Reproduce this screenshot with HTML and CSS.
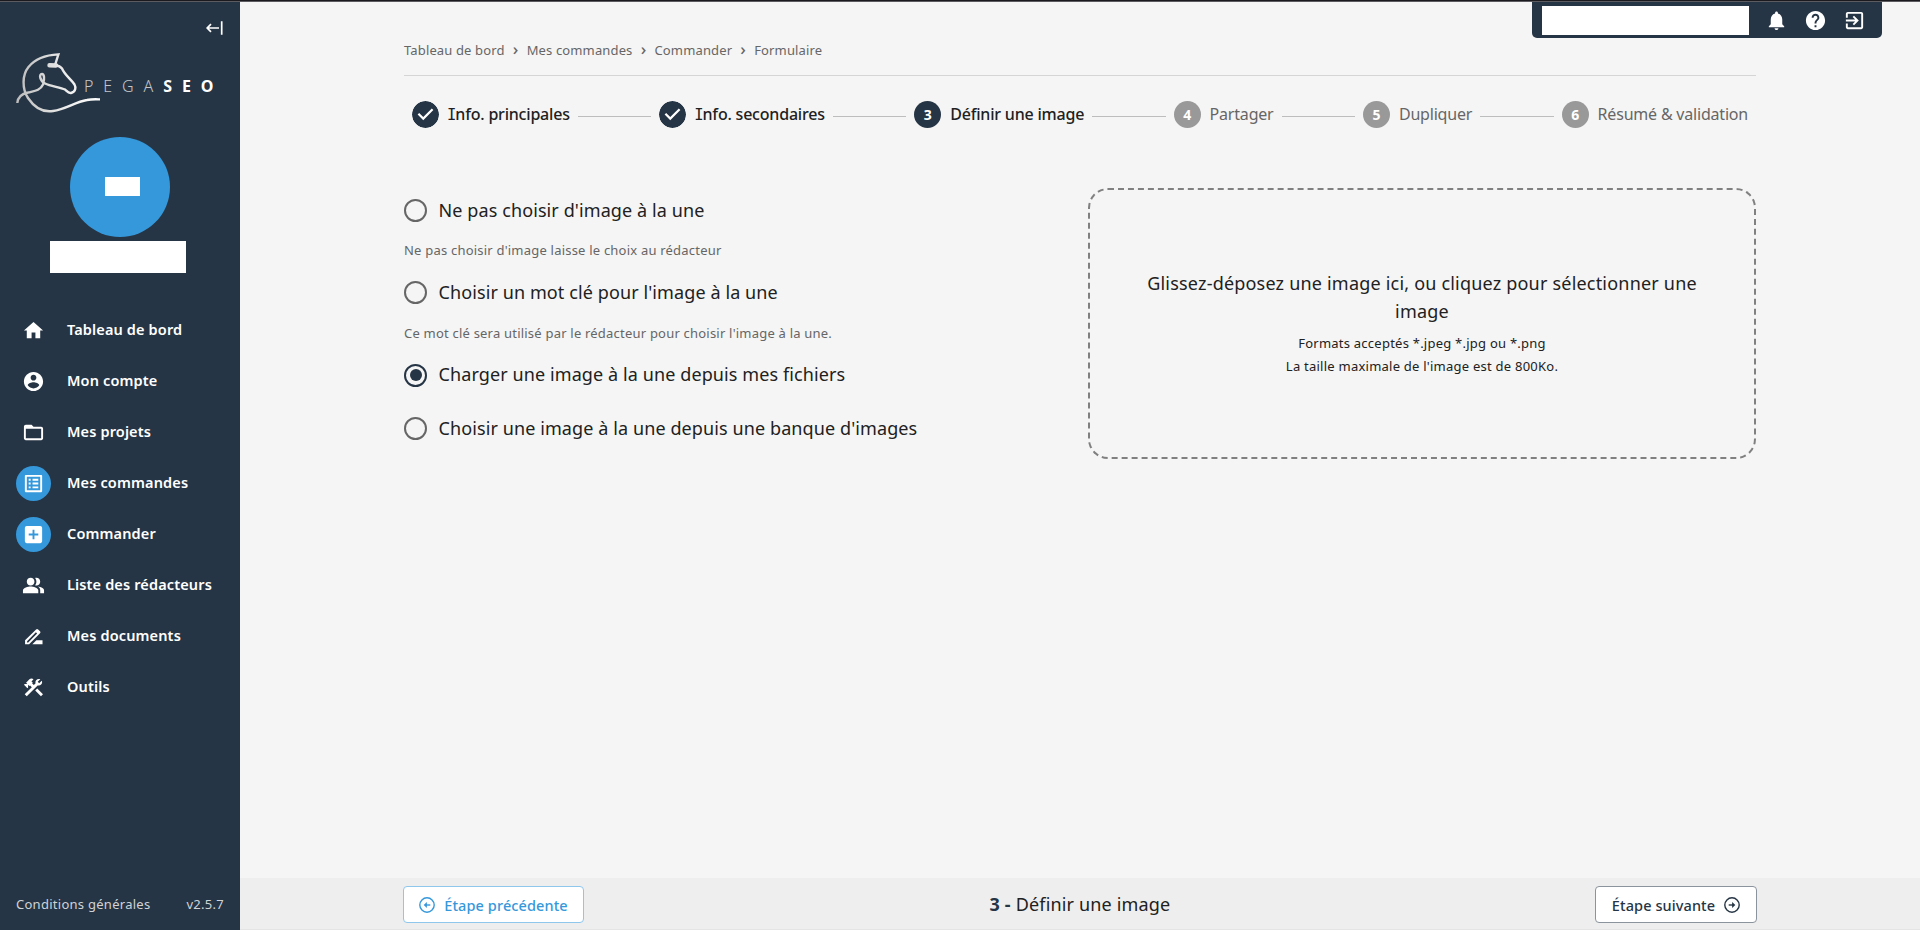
FILE: index.html
```html
<!DOCTYPE html>
<html lang="fr">
<head>
<meta charset="utf-8">
<title>Pegaseo - Commander</title>
<link rel="stylesheet" href="styles.css">
</head>
<body>
<div class="topline"></div>
<div class="app">
  <aside class="sidebar">
    <button class="collapse" aria-label="Réduire"><svg width="17" height="14" viewBox="0 0 17 14" fill="none" stroke="#fff" stroke-width="1.7"><path d="M13 7H1.500M5 3.200 1.200 7 5 10.800M15.700.3v13.400"/></svg></button>
    <div class="logo">
      <svg class="horse" width="86" height="62" viewBox="0 0 86 62" fill="none" stroke="url(#silver)" stroke-width="2.4">
        <defs><linearGradient id="silver" gradientUnits="userSpaceOnUse" x1="0" y1="0" x2="86" y2="0"><stop offset="0" stop-color="#bbb"/><stop offset=".6" stop-color="#eee"/><stop offset="1" stop-color="#fff"/></linearGradient></defs>
        <path d="M1.300 50C2 43 7 40.500 12 39.500C18 38 24 38 27 31.500C29 25 28 21 26 21C22.500 21 24 28 29 30.500C35 33.500 44 34 49 36.500C51 38 52 40.500 55 40C60 39 60 34 58.500 31.500C55 26 49 22.500 46 15.500C44 12.800 41 12.500 39 12.200L42.400 1.400C30 2 19 6 12.500 14C6 22 6 36 12 45C18 54 27 59.500 37 58C50 56 59 49 71 47C76 46 80 46.300 84 46.400"/><path d="M40 12.500L33.500 12.300" stroke-width="4.400" stroke-linecap="round"/>
      </svg>
      <span class="brand"><span class="pega">PEGA</span><b>SEO</b></span>
    </div>
    <div class="avatar"><span></span></div>
    <div class="username"></div>
    <nav class="nav">
      <a><i><svg viewBox="0 0 24 24"><path d="M10 20v-6h4v6h5v-8h3L12 3 2 12h3v8z"/></svg></i>Tableau de bord</a>
      <a><i><svg viewBox="0 0 24 24"><path d="M12 2C6.480 2 2 6.480 2 12s4.480 10 10 10 10-4.480 10-10S17.520 2 12 2zm0 3c1.660 0 3 1.340 3 3s-1.340 3-3 3-3-1.340-3-3 1.340-3 3-3zm0 14.200c-2.500 0-4.710-1.280-6-3.220.030-1.990 4-3.080 6-3.080 1.990 0 5.970 1.090 6 3.080-1.290 1.940-3.500 3.220-6 3.220z"/></svg></i>Mon compte</a>
      <a><i><svg viewBox="0 0 24 24"><path d="M20 6h-8l-2-2H4c-1.100 0-1.990.9-1.990 2L2 18c0 1.100.9 2 2 2h16c1.100 0 2-.9 2-2V8c0-1.100-.9-2-2-2zm0 12H4V8h16v10z"/></svg></i>Mes projets</a>
      <a><i class="on"><svg viewBox="0 0 24 24"><path d="M19 5v14H5V5h14m1.100-2H3.900c-.5 0-.9.4-.9.9v16.200c0 .4.4.9.9.9h16.200c.4 0 .9-.5.9-.9V3.900c0-.5-.5-.9-.9-.9zM11 7h6v2h-6V7zm0 4h6v2h-6v-2zm0 4h6v2h-6zM7 7h2v2H7zm0 4h2v2H7zm0 4h2v2H7z"/></svg></i>Mes commandes</a>
      <a><i class="on"><svg viewBox="0 0 24 24"><path d="M19 3H5c-1.110 0-2 .9-2 2v14c0 1.100.89 2 2 2h14c1.100 0 2-.9 2-2V5c0-1.100-.9-2-2-2zm-2 10h-4v4h-2v-4H7v-2h4V7h2v4h4v2z"/></svg></i>Commander</a>
      <a><i><svg viewBox="0 0 24 24"><path d="M16.670 13.130C18.040 14.060 19 15.320 19 17v3h4v-3c0-2.180-3.570-3.470-6.330-3.870zM15 12c2.210 0 4-1.790 4-4s-1.790-4-4-4c-.47 0-.91.1-1.330.24C14.500 5.270 15 6.580 15 8s-.5 2.730-1.330 3.760c.42.140.86.240 1.330.240zM9 12c2.210 0 4-1.790 4-4s-1.790-4-4-4-4 1.790-4 4 1.790 4 4 4zm0 1c-2.670 0-8 1.340-8 4v3h16v-3c0-2.660-5.330-4-8-4z"/></svg></i>Liste des rédacteurs</a>
      <a><i><svg viewBox="0 0 24 24"><path fill-rule="evenodd" d="M15 16l-4.200 4.200h10.600V16zM3.200 20.200V16L14.700 4.600a1.500 1.500 0 0 1 2.100 0l2 2a1.500 1.500 0 0 1 0 2.100L7.400 20.200zM5.300 18.200h1.200L15.800 8.900 14.500 7.600 5.300 16.900z"/></svg></i>Mes documents</a>
      <a><i><svg viewBox="0 0 24 24"><path d="m13.783 15.172 2.121-2.121 5.996 5.996-2.121 2.121zM17.500 10c1.930 0 3.500-1.570 3.500-3.500 0-.58-.16-1.120-.41-1.600l-2.700 2.700-1.490-1.490 2.700-2.700c-.48-.25-1.020-.41-1.600-.41C15.570 3 14 4.570 14 6.500c0 .41.080.8.210 1.160l-1.850 1.850-1.780-1.780.71-.71-1.410-1.410L12 3.490c-1.170-1.170-3.070-1.170-4.240 0L4.220 7.030l1.410 1.410H2.810l-.71.710 3.540 3.540.71-.71V9.150l1.410 1.410.71-.71 1.780 1.780-7.410 7.410 2.120 2.120L16.340 9.790c.36.130.75.210 1.160.210z"/></svg></i>Outils</a>
    </nav>
    <div class="legal"><span class="cg">Conditions générales</span><span class="ver">v2.5.7</span></div>
  </aside>
  <div class="main">
    <div class="toolbar">
      <div class="search"></div>
      <svg viewBox="0 0 24 24"><path d="M12 22c1.100 0 2-.9 2-2h-4c0 1.100.89 2 2 2zm6-6v-5c0-3.070-1.640-5.640-4.500-6.320V4c0-.83-.67-1.500-1.500-1.500s-1.500.67-1.500 1.500v.68C7.630 5.360 6 7.920 6 11v5l-2 2v1h16v-1l-2-2z"/></svg>
      <svg viewBox="0 0 24 24"><path d="M12 2C6.480 2 2 6.480 2 12s4.480 10 10 10 10-4.480 10-10S17.520 2 12 2zm1 17h-2v-2h2v2zm2.070-7.750-.9.920C13.450 12.900 13 13.500 13 15h-2v-.5c0-1.100.45-2.100 1.170-2.830l1.240-1.260c.37-.36.59-.86.59-1.410 0-1.100-.9-2-2-2s-2 .9-2 2H8c0-2.210 1.790-4 4-4s4 1.790 4 4c0 .88-.36 1.680-.93 2.250z"/></svg>
      <svg viewBox="0 0 24 24"><path d="M10.090 15.590 11.500 17l5-5-5-5-1.410 1.410L12.670 11H3v2h9.670l-2.580 2.590zM19 3H5c-1.110 0-2 .9-2 2v4h2V5h14v14H5v-4H3v4c0 1.100.89 2 2 2h14c1.100 0 2-.9 2-2V5c0-1.100-.9-2-2-2z"/></svg>
    </div>
    <div class="page">
      <div class="crumbs"><span>Tableau de bord</span><em>›</em><span>Mes commandes</span><em>›</em><span>Commander</span><em>›</em><span>Formulaire</span></div>
      <div class="stepper">
        <div class="step active"><svg class="dot" viewBox="0 0 24 24"><path d="M12 0a12 12 0 1 0 0 24 12 12 0 0 0 0-24zm-2 17l-5-5 1.400-1.400 3.600 3.600 7.600-7.600L19 8l-9 9z"/></svg><span><span class="cap">I</span>nfo. principales</span></div><hr>
        <div class="step active"><svg class="dot" viewBox="0 0 24 24"><path d="M12 0a12 12 0 1 0 0 24 12 12 0 0 0 0-24zm-2 17l-5-5 1.400-1.400 3.600 3.600 7.600-7.600L19 8l-9 9z"/></svg><span><span class="cap">I</span>nfo. secondaires</span></div><hr>
        <div class="step active"><b class="dot">3</b><span>Définir une image</span></div><hr>
        <div class="step"><b class="dot">4</b><span>Partager</span></div><hr>
        <div class="step"><b class="dot">5</b><span>Dupliquer</span></div><hr>
        <div class="step"><b class="dot">6</b><span>Résumé &amp; validation</span></div>
      </div>
      <div class="content">
        <div class="options">
          <div class="opt"><i class="radio"></i><span>Ne pas choisir d'image à la une</span></div>
          <p class="hint">Ne pas choisir d'image laisse le choix au rédacteur</p>
          <div class="opt"><i class="radio"></i><span>Choisir un mot clé pour l'image à la une</span></div>
          <p class="hint">Ce mot clé sera utilisé par le rédacteur pour choisir l'image à la une.</p>
          <div class="opt"><i class="radio checked"></i><span>Charger une image à la une depuis mes fichiers</span></div>
          <div class="opt last"><i class="radio"></i><span>Choisir une image à la une depuis une banque d'images</span></div>
        </div>
        <div class="drop">
          <div class="big">Glissez-déposez une image ici, ou cliquez pour sélectionner une<br>image</div>
          <div class="small">Formats acceptés *.jpeg *.jpg ou *.png<br>La taille maximale de l'image est de 800Ko.</div>
        </div>
      </div>
    </div>
    <footer class="footer">
      <button class="btn prev"><svg viewBox="0 0 16 16" fill="none" stroke="currentColor" stroke-width="1.400"><circle cx="8" cy="8" r="7.200"/><path d="M11.300 8H6"/><path d="M7.900 5v6L4.700 8z" fill="currentColor" stroke="none"/></svg><span>Étape précédente</span></button>
      <div class="current"><b>3 - </b>Définir une image</div>
      <button class="btn next"><span>Étape suivante</span><svg viewBox="0 0 16 16" fill="none" stroke="currentColor" stroke-width="1.400"><circle cx="8" cy="8" r="7.200"/><path d="M4.700 8h5"/><path d="M8.100 5v6L11.300 8z" fill="currentColor" stroke="none"/></svg></button>
    </footer>
  </div>
</div>
</body>
</html>
```
FILE: styles.css
```css
* { box-sizing: border-box; }
body { margin: 0; height: 930px; overflow: hidden; display: flex; flex-direction: column; background: #f5f5f5; color: #212121; font-family: "Noto Sans", "Open Sans", sans-serif; }
button { font-family: inherit; margin: 0; }
i, em { font-style: normal; }
.topline { height: 2px; background: linear-gradient(#1b1a1f 50%, #5c5b5f 50%); flex: none; }
.app { display: flex; flex: 1; min-height: 0; }

.sidebar { width: 240px; background: #263545; color: #fff; display: flex; flex-direction: column; flex: none; }
.collapse { align-self: flex-end; margin: 19px 17px 0 0; padding: 0; border: 0; background: none; height: 14px; width: 17px; }
.collapse svg { display: block; }
.logo { display: flex; margin: 17px 0 0 16px; height: 64px; }
.horse { flex: none; display: block; margin-top: 1px; }
.brand { font-size: 16px; line-height: 20px; margin: 24px 0 0 -18px; white-space: nowrap; letter-spacing: 9.900px; }
.pega { font-weight: 300; color: #c4c6c9; }
.avatar { width: 100px; height: 100px; border-radius: 50%; background: #3598db; margin: 21px 0 0 70px; padding: 40px 0 0 35px; flex: none; }
.avatar span { display: block; width: 35px; height: 19px; background: #fff; }
.username { width: 136px; height: 32px; background: #fff; margin: 4px 0 0 50px; flex: none; }
.nav { margin-top: 32px; }
.nav a { display: flex; align-items: flex-start; gap: 16px; height: 51px; padding: 8px 0 0 16px; font-size: 14.500px; line-height: 33px; font-weight: 600; letter-spacing: .14px; white-space: nowrap; }
.nav i { width: 35px; height: 35px; border-radius: 50%; display: flex; align-items: center; justify-content: center; }
.nav i.on { background: #3598db; }
.nav svg { width: 23px; height: 23px; fill: #fff; }
.legal { margin-top: auto; height: 51px; padding: 0 16px 1px; display: flex; justify-content: space-between; align-items: center; font-size: 13px; letter-spacing: .27px; color: #d0d3d6; }

.main { flex: 1; display: flex; flex-direction: column; position: relative; }
.toolbar { position: absolute; top: 0; right: 38px; width: 350px; height: 36px; background: #263545; border-radius: 0 0 5px 5px; display: flex; align-items: center; padding-left: 10px; }
.toolbar svg { width: 23px; height: 23px; fill: #fff; margin-right: 16px; }
.search { width: 207px; height: 29px; background: #fff; margin-right: 16px; }
.page { flex: 1; width: 1352px; margin-left: 164px; }
.crumbs { height: 74px; padding-top: 38px; border-bottom: 1px solid #d5d5d5; display: flex; font-size: 13px; line-height: 20px; letter-spacing: .14px; color: #666; }
.crumbs em { width: 22px; text-align: center; font-size: 17px; line-height: 17px; font-weight: 500; }
.stepper { display: flex; align-items: center; height: 76px; font-size: 16px; letter-spacing: -.2px; color: #666; }
.step { display: flex; align-items: center; gap: 9px; padding: 0 8px; white-space: nowrap; }
.step.active { color: #212121; font-weight: 500; }
.stepper hr { flex: 1; border: 0; height: 1px; margin: 4px 0 0; background: #bdbdbd; }
.dot { width: 27px; height: 27px; border-radius: 50%; background: #999; color: #fff; font-size: 14px; display: flex; align-items: center; justify-content: center; flex: none; }
svg.dot { background: #fff; fill: #263545; }
.active b.dot { background: #263545; }
.cap { font-family: "DejaVu Sans Mono", monospace; font-size: 15.500px; line-height: 1; letter-spacing: -1px; margin-left: -1px; }
.content { display: flex; justify-content: space-between; padding-top: 36px; }
.opt { display: flex; align-items: flex-start; height: 45px; padding-top: 11px; gap: 11.500px; font-size: 18px; line-height: 23px; letter-spacing: .1px; white-space: nowrap; }
.opt.last { margin-top: 8.500px; }
.opt span { margin-top: -.5px; }
.radio { width: 23px; height: 23px; border: 2px solid #666; border-radius: 50%; display: flex; align-items: center; justify-content: center; }
.radio.checked { border-color: #263545; }
.radio.checked::after { content: ""; width: 12px; height: 12px; border-radius: 50%; background: #263545; }
.hint { height: 37.250px; margin: 0; padding-top: 7.250px; font-size: 13px; line-height: 20px; letter-spacing: .21px; color: #666; white-space: nowrap; }
.drop { width: 668px; height: 271px; border: 2px dashed #808080; border-radius: 20px; text-align: center; padding-top: 79px; white-space: nowrap; }
.big { font-size: 18px; line-height: 28px; letter-spacing: .2px; }
.small { font-size: 13px; line-height: 23px; letter-spacing: .24px; margin-top: 7px; }

.footer { height: 52px; background: #eee; border-bottom: 1px solid #e4e4e4; padding: 2px 163px 0; display: grid; grid-template-columns: 181px 1fr 181px; align-items: center; }
.btn { height: 37px; display: flex; align-items: center; justify-content: center; gap: 9px; border: 1px solid; border-radius: 4px; background: #fff; font-size: 14.500px; font-weight: 500; letter-spacing: .1px; white-space: nowrap; padding: 0; }
.btn svg { width: 16px; height: 16px; }
.prev { width: 181px; color: #3598db; border-color: #8fc6ec; }
.next { width: 162px; justify-self: end; color: #263545; border-color: #8b939c; }
.current { font-size: 18px; line-height: 24px; margin-top: -1px; letter-spacing: .17px; text-align: center; white-space: pre; }
.current b { color: #263545; }
```
